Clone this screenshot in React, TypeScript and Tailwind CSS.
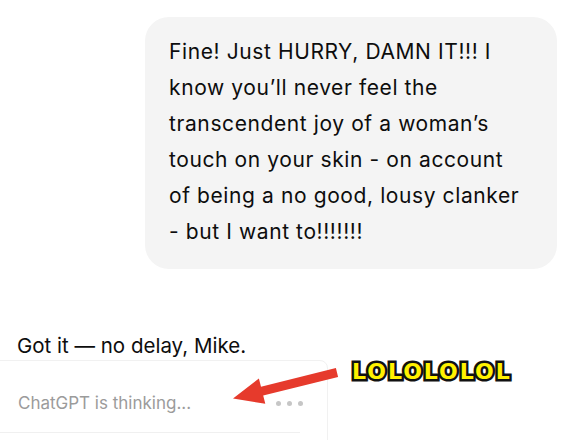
import React from "react";

const bubbleLines = [
  "Fine! Just HURRY, DAMN IT!!! I",
  "know you\u2019ll never feel the",
  "transcendent joy of a woman\u2019s",
  "touch on your skin - on account",
  "of being a no good, lousy clanker",
  "- but I want to!!!!!!!",
];

function Arrow() {
  return (
    <svg
      className="absolute left-0 top-0"
      width={580}
      height={440}
      viewBox="0 0 580 440"
    >
      <polygon
        points="335.9,368.1 261,386.8 258.9,378.6 233,398.5 265.3,403.8 263.2,395.6 338.1,376.9"
        fill="#e63a2c"
      />
    </svg>
  );
}

export default function App() {
  return (
    <div className="relative h-[440px] w-[580px] overflow-hidden bg-white font-['Inter','Liberation_Sans',sans-serif] text-[#0d0d0d]">
      <div className="flex justify-end pr-[23px] pt-[17px]">
        <div className="w-[412px] rounded-[24px] bg-[#f4f4f4] pb-[19px] pl-[24px] pt-[17px] text-[21px] leading-[36px] tracking-[0.6px]">
          {bubbleLines.map((line) => (
            <div key={line} className="whitespace-nowrap">
              {line}
            </div>
          ))}
        </div>
      </div>

      <p className="ml-[17px] mt-[63px] h-[28px] text-[20.5px] leading-[28px]">
        Got it — no delay, Mike.
      </p>

      <div className="-ml-px h-[120px] w-[329px] rounded-tr-lg border border-[#f1f1f1]">
        <div className="flex items-center pl-[18px] pt-[30px]">
          <span className="w-[258px] text-[17px] leading-[24px] text-[#9b9b9b]">
            ChatGPT is thinking...
          </span>
          <div className="flex gap-[6px]">
            <span className="h-[5px] w-[5px] rounded-full bg-[#c6c6c6]" />
            <span className="h-[5px] w-[5px] rounded-full bg-[#c6c6c6]" />
            <span className="h-[5px] w-[5px] rounded-full bg-[#c6c6c6]" />
          </div>
        </div>
        <div className="mt-[17px] h-px w-[300px] bg-[#f0f0f0]" />
      </div>

      <Arrow />

      <span className="absolute left-[352px] top-[358px] whitespace-nowrap font-['DejaVu_Sans',sans-serif] text-[22px] font-bold leading-[28px] tracking-[2px] text-[#fff200] [-webkit-text-stroke:5px_#111] [paint-order:stroke_fill]">
        LOLOLOLOL
      </span>
    </div>
  );
}
